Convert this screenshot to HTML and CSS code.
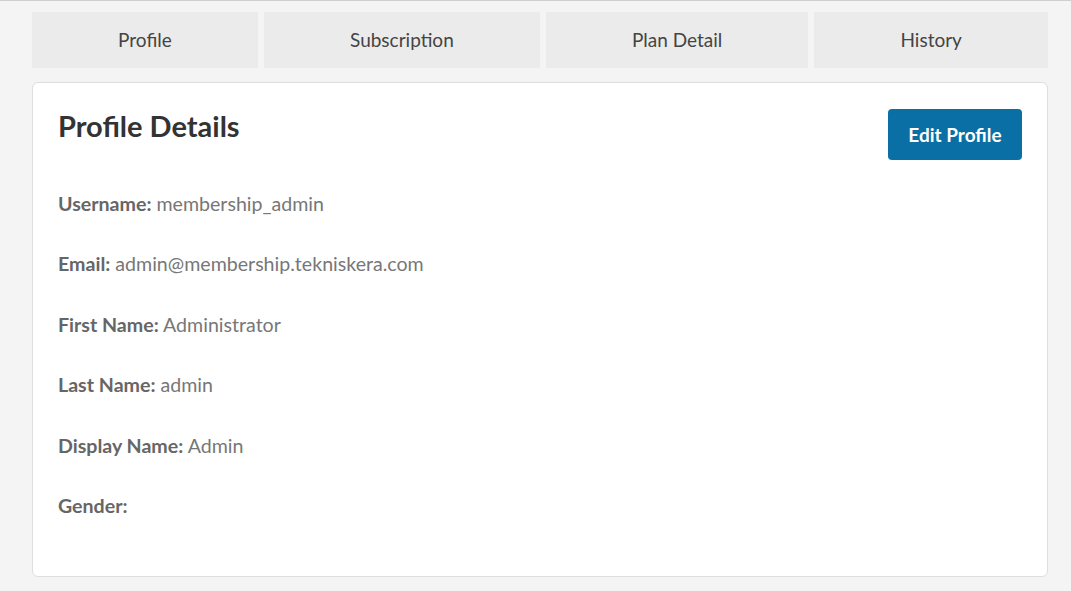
FILE: index.html
```html
<!DOCTYPE html>
<html lang="en">
<head>
    <meta charset="UTF-8">
    <meta name="viewport" content="width=device-width, initial-scale=1.0">
    <title>Profile</title>
    <link rel="stylesheet" href="styles.css">
</head>
<body>
    <div id="main">
        <div class="tabs">
            <div class="tab">Profile</div>
            <div class="tab">Subscription</div>
            <div class="tab">Plan Detail</div>
            <div class="tab">History</div>
        </div>
        <div class="card">
            <div class="card-head">
                <h2>Profile Details</h2>
                <button class="edit-btn">Edit Profile</button>
            </div>
            <div class="details">
                <p><strong>Username:</strong> membership_admin</p>
                <p><strong>Email:</strong> admin@membership.tekniskera.com</p>
                <p><strong>First Name:</strong> Administrator</p>
                <p><strong>Last Name:</strong> admin</p>
                <p><strong>Display Name:</strong> Admin</p>
                <p><strong>Gender:</strong></p>
            </div>
        </div>
    </div>
</body>
</html>
```

FILE: styles.css
```css
* {
    margin: 0;
    padding: 0;
    box-sizing: border-box;
}
html, body {
    width: 100%;
    height: 100%;
    overflow: hidden;
}
body {
    font-family: Lato, 'Noto Sans', sans-serif;
    background-color: #f4f4f4;
    border-top: 1px solid #cfcfcf;
    color: #333;
}
#main {
    padding: 11px 23px 0 32px;
}
.tabs {
    display: flex;
    gap: 6px;
    height: 56px;
}
.tab {
    flex: 1 1 auto;
    display: flex;
    align-items: center;
    justify-content: center;
    background-color: #ebebeb;
    color: #444;
    font-size: 19px;
    padding-bottom: 2px;
}
.card {
    margin-top: 14px;
    background-color: #fff;
    border: 1px solid #dedede;
    border-radius: 6px;
    padding: 26px 25px 57px 25px;
}
.card-head {
    display: flex;
    justify-content: space-between;
    align-items: flex-start;
}
.card-head h2 {
    font-size: 29px;
    font-weight: 700;
    color: #333;
    line-height: 34px;
}
.edit-btn {
    width: 134px;
    height: 51px;
    background-color: #0a6fa5;
    color: #fff;
    border: none;
    border-radius: 4px;
    font-family: inherit;
    font-size: 19px;
    font-weight: 700;
    cursor: pointer;
}
.details {
    margin-top: 31px;
    display: flex;
    flex-direction: column;
    gap: 34.4px;
}
.details p {
    font-size: 19.6px;
    line-height: 26px;
    color: #777;
}
.details strong {
    color: #666;
    font-weight: 700;
}
```
